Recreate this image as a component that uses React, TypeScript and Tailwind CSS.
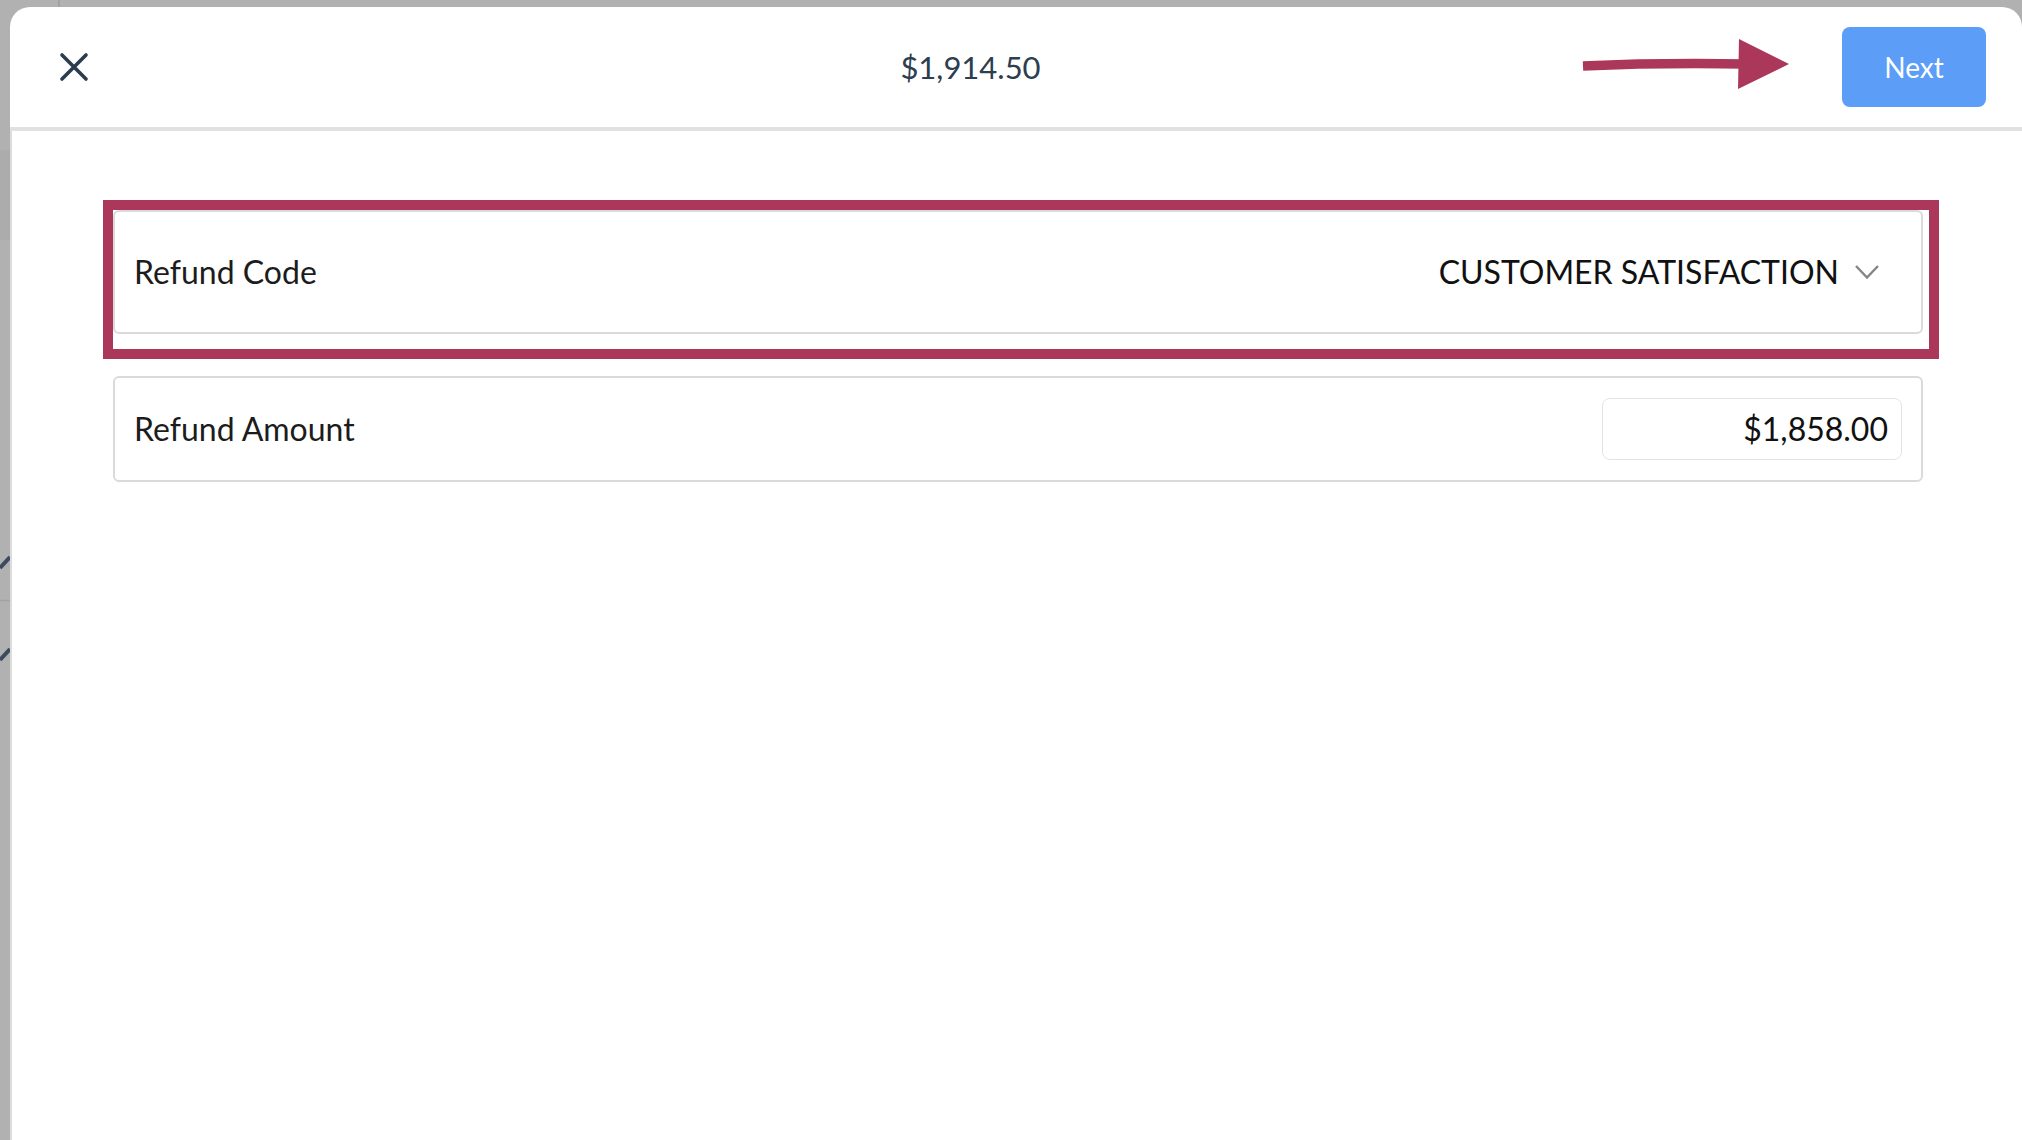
import React from "react";

const font = { fontFamily: "Lato, 'Open Sans', sans-serif" };

function CloseIcon() {
  return (
    <svg width="30" height="30" viewBox="0 0 30 30" fill="none">
      <path d="M3 3 L27 27 M27 3 L3 27" stroke="#2c3b4f" strokeWidth="3.6" strokeLinecap="round" />
    </svg>
  );
}

function Chevron() {
  return (
    <svg width="24" height="14" viewBox="0 0 24 14" fill="none">
      <path d="M1 1 L12 12.5 L23 1" stroke="#858585" strokeWidth="2.4" />
    </svg>
  );
}

// the red annotation arrow pointing at Next
function AnnotationArrow() {
  return (
    <svg width="215" height="60" viewBox="0 0 215 60" className="absolute left-[1570px] top-[28px]">
      <path d="M3 31 Q80 27.5 166 29" stroke="#ab385b" strokeWidth="9.5" fill="none" />
      <polygon points="159,4 209,29 158,54" fill="#ab385b" />
    </svg>
  );
}

export default function App() {
  return (
    <div className="w-[2022px] h-[1140px] bg-[#b1b1b1] flex overflow-hidden" style={font}>
      {/* sliver of the page behind the modal */}
      <div className="w-[10px] shrink-0 flex flex-col">
        <div className="h-[150px]" />
        <div className="h-[90px] bg-[#acacac]" />
        <svg width="10" height="440" viewBox="0 0 10 440">
          <path d="M0 328 L10 317" stroke="#3d4a5f" strokeWidth="4" />
          <line x1="0" y1="360.5" x2="10" y2="360.5" stroke="#a3a3a3" strokeWidth="1.5" />
          <path d="M0 420 L10 409" stroke="#3d4a5f" strokeWidth="4" />
        </svg>
      </div>

      <div className="flex-1 flex flex-col">
        <div className="h-[7px] shrink-0">
          <div className="ml-[48px] w-[2px] h-full bg-[#a2a2a2]" />
        </div>

        <div className="flex-1 bg-white rounded-t-[20px] flex flex-col">
          <header className="relative h-[124px] shrink-0 flex items-center border-b-4 border-[#e1e1e1]">
            <button className="ml-[49px] flex items-center">
              <CloseIcon />
            </button>
            <div className="flex-1 text-center pl-[10px] text-[31px] text-[#2c3e50]">$1,914.50</div>
            <AnnotationArrow />
            <button className="mr-[36px] w-[144px] h-[80px] rounded-[8px] bg-[#5b9df7] text-white text-[28px] flex items-center justify-center">
              Next
            </button>
          </header>

          <div className="flex-1 border-l-2 border-[#dcdcdc] pl-[101px] pr-[99px] pt-[79px] flex flex-col gap-[42px]">
            <div className="relative">
              <div className="h-[124px] border-2 border-[#dadada] rounded-[6px] pl-[19px] pr-[42px] flex items-center justify-between text-[32px] text-[#1c1c1c]">
                <span>Refund Code</span>
                <div className="flex items-center gap-[16px]">
                  <span className="text-[#111]">CUSTOMER SATISFACTION</span>
                  <Chevron />
                </div>
              </div>
              <div className="absolute -left-[10px] -top-[10px] -right-[16px] -bottom-[25px] border-[10px] border-[#ab385b] pointer-events-none" />
            </div>

            <div className="h-[106px] border-2 border-[#dadada] rounded-[6px] pl-[19px] pr-[19px] flex items-center justify-between text-[32px] text-[#1c1c1c]">
              <span>Refund Amount</span>
              <div className="w-[300px] h-[62px] border border-[#e3e3e3] rounded-[8px] flex items-center justify-end pr-[13px] text-[#111]">
                $1,858.00
              </div>
            </div>
          </div>
        </div>
      </div>
    </div>
  );
}
